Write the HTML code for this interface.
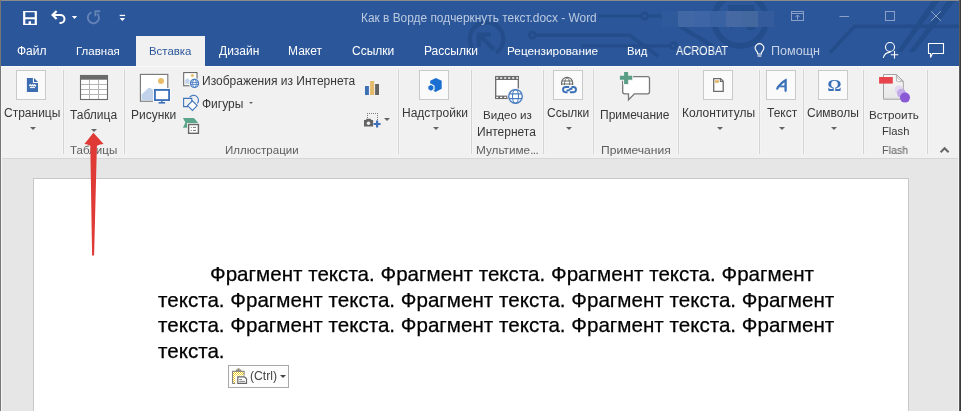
<!DOCTYPE html>
<html><head><meta charset="utf-8">
<style>
*{margin:0;padding:0;box-sizing:border-box}
html,body{width:961px;height:411px;overflow:hidden;background:#e6e6e6}
body{position:relative;font-family:"Liberation Sans",sans-serif}
.t,.a{will-change:transform}
.a{position:absolute}
.t{position:absolute;white-space:nowrap;font-size:12px;line-height:12px}
.tab{color:#fff}
.rl{color:#383838}
.gl{color:#5e5e5e}
.sep{position:absolute;width:1px;background:#d3d3d3;top:70px;height:84px;box-shadow:-1px 0 #f6f6f6,1px 0 #f5f5f5}
.box{position:absolute;width:30px;height:30px;top:70px;background:#fafafa;border:1px solid #c9c9c9}
.dd{position:absolute;width:0;height:0;border-left:3px solid transparent;border-right:3px solid transparent;border-top:3px solid #646464}
svg{position:absolute;overflow:visible}
</style></head><body>

<!-- title bar + tab row -->
<div class="a" style="left:0;top:0;width:961px;height:66px;background:#2b579a"></div>
<!-- circuit pattern -->
<svg style="left:0;top:0" width="961" height="66" viewBox="0 0 961 66">
 <g fill="none" stroke="#244d8b" stroke-width="3.2">
  <path d="M496.1 52.8 A16.8 16.8 0 1 0 476.9 52.8" stroke-width="4.4"/>
  <path d="M478.5 34.5 L494 49.5" stroke-width="4.4"/>
  <path d="M478.8 47 V34.6 H491" stroke-width="4.2"/>
  <path d="M536 35.2 H630 L658 56" stroke-width="3.6"/>
  <path d="M598 16 H661.5"/>
  <path d="M581 45.8 H669"/>
  <path d="M679 25.5 L713 46.5" stroke-width="4"/>
  <circle cx="740" cy="19.8" r="26" stroke-width="5.8"/>
  <path d="M830 52.5 L854.5 26.4 H961" stroke-width="3.6"/>
 </g>
 <path d="M896.8 52 H902 L940 0 H932.6 Z M908.5 52 H914.3 L956 0 H948 Z" fill="#244d8b"/>
 <path d="M728 5 H754.5 V30 H747 V12 H735 L731 31.5 Z" fill="#244d8b"/>
 <g fill="#2b579a" stroke="#244d8b" stroke-width="3">
  <circle cx="532.4" cy="35.1" r="3.1"/>
  <circle cx="644.6" cy="16" r="3"/>
  <circle cx="673.5" cy="45.8" r="3"/>
 </g>
</svg>
<!-- blurred name -->
<div class="a" style="left:662px;top:11px;width:16px;height:16px;background:#2e5a9c"></div>
<div class="a" style="left:678px;top:11px;width:16px;height:16px;background:#4168a5"></div>
<div class="a" style="left:694px;top:11px;width:16px;height:16px;background:#3e66a6"></div>
<div class="a" style="left:710px;top:11px;width:16px;height:16px;background:#3862a2"></div>
<div class="a" style="left:726px;top:11px;width:16px;height:16px;background:#4669a3"></div>
<div class="a" style="left:742px;top:11px;width:16px;height:16px;background:#43679f"></div>
<div class="a" style="left:758px;top:11px;width:16px;height:16px;background:#345c9c"></div>

<div class="t" style="left:361px;top:11.5px;color:#bccae0;font-size:11.9px">Как в Ворде подчеркнуть текст.docx - Word</div>

<!-- QAT icons -->
<svg style="left:0;top:0" width="140" height="30">
 <path d="M23.1 11.1 H36.9 V24.9 H23.1 Z M25.3 12.3 H34.7 V17.3 H25.3 Z M25.3 19.3 H34.7 V23.7 H31 V21.3 H28.6 V23.7 H25.3 Z" fill="#fff" fill-rule="evenodd"/>
 <path d="M53 15 H60.5 A4 4 0 0 1 60.5 23 H59.5" fill="none" stroke="#fff" stroke-width="2"/>
 <path d="M56.6 10.9 L52.6 15 L56.6 19" fill="none" stroke="#fff" stroke-width="2.2" stroke-linejoin="miter"/>
 <path d="M71.9 15.9 H77.2 L74.55 19 Z" fill="#fff"/>
 <path d="M91.6 12.3 A5.6 5.6 0 1 0 97.4 13.7" fill="none" stroke="#6483b7" stroke-width="1.9"/>
 <path d="M95.4 16.3 V11.3 H100.2" fill="none" stroke="#6483b7" stroke-width="1.9"/>
 <rect x="119.7" y="14.8" width="5.4" height="1.3" fill="#fff"/>
 <path d="M119.6 18 H125.2 L122.4 21 Z" fill="#fff"/>
</svg>

<!-- window controls -->
<svg style="left:0;top:0" width="961" height="30">
 <g fill="none" stroke="#8aa0c6" stroke-width="1">
  <rect x="791.5" y="11.5" width="12" height="9"/>
  <path d="M791.5 13.5 H803.5"/>
  <path d="M797.5 19.5 V15 M795.5 17 L797.5 15 L799.5 17"/>
  <path d="M839.5 16.5 H849"/>
  <rect x="885.5" y="11.5" width="9" height="9"/>
  <path d="M931 11 L941 21 M941 11 L931 21"/>
 </g>
</svg>

<!-- tabs -->
<div class="a" style="left:136px;top:36px;width:69px;height:30px;background:#f1f1f1"></div>
<div class="t tab" style="left:17px;top:45px">Файл</div>
<div class="t tab" style="left:76px;top:45px;font-size:11.5px">Главная</div>
<div class="t" style="left:148.5px;top:45px;color:#2b579a;font-size:11.4px">Вставка</div>
<div class="t tab" style="left:219px;top:45px">Дизайн</div>
<div class="t tab" style="left:288px;top:45px">Макет</div>
<div class="t tab" style="left:352px;top:45px">Ссылки</div>
<div class="t tab" style="left:424px;top:45px">Рассылки</div>
<div class="t tab" style="left:506.5px;top:45px;font-size:11.8px">Рецензирование</div>
<div class="t tab" style="left:626.5px;top:45px;font-size:11.3px">Вид</div>
<div class="t tab" style="left:675.5px;top:45px;font-size:12px;transform:scaleX(0.912);transform-origin:0 0">ACROBAT</div>
<div class="t" style="left:771px;top:45px;color:#c5d1e5;font-size:12.6px;top:44.5px">Помощн</div>
<svg style="left:0;top:0" width="961" height="66">
 <g fill="none" stroke="#fff" stroke-width="1.1">
  <path d="M757.6 54 V52.6 L756.2 50.6 A4.2 4.2 0 1 1 762.8 50.6 L761.4 52.6 V54 Z"/>
  <path d="M757.6 56 h3.8"/>
  <circle cx="890" cy="47" r="4.5"/>
  <path d="M883.3 57.8 Q884.6 52.4 890.5 52.1"/>
  <path d="M894.5 51 V58.5 M890.75 54.75 H898.25"/>
  <path d="M928.5 43.5 H943.5 V53.5 H932.5 L930.5 57.5 V53.5 H928.5 Z"/>
 </g>
</svg>

<!-- ribbon -->
<div class="a" style="left:0;top:66px;width:961px;height:92px;background:#f1f1f1"></div>
<div class="a" style="left:0;top:158px;width:961px;height:1px;background:#d6d6d6"></div>
<div class="a" style="left:0;top:66px;width:961px;height:1px;background:#f9f9f7"></div>

<div class="sep" style="left:63px"></div>
<div class="sep" style="left:124px"></div>
<div class="sep" style="left:398px"></div>
<div class="sep" style="left:471px"></div>
<div class="sep" style="left:543px"></div>
<div class="sep" style="left:593px"></div>
<div class="sep" style="left:678px"></div>
<div class="sep" style="left:759px"></div>
<div class="sep" style="left:803px"></div>
<div class="sep" style="left:863px"></div>
<div class="sep" style="left:927px"></div>

<!-- Pages -->
<div class="box" style="left:16px"></div>
<svg style="left:0;top:0" width="60" height="140">
 <path d="M26.9 78 H32.9 V83 H38 V91.9 H26.9 Z" fill="#3d6db1"/>
 <path d="M34 78 V81.9 H38 Z" fill="#3d6db1"/>
 <path d="M29.2 86 L30.2 84.6 L31.2 86 L32.2 84.6 L33.2 86 L34.2 84.6 L35.2 86 L36 84.8" stroke="#fff" stroke-width="1.1" fill="none"/>
 <rect x="29.9" y="87.1" width="5.1" height="1" fill="#fff"/>
</svg>
<div class="t rl" style="left:4px;top:107px">Страницы</div>
<div class="dd" style="left:30px;top:127px"></div>

<!-- Table -->
<svg style="left:0;top:0" width="120" height="140">
 <rect x="80.5" y="79.5" width="27" height="20" fill="#fff"/>
 <path d="M80.5 84.5 H107.5 M80.5 89.5 H107.5 M80.5 94.5 H107.5 M89.5 79.5 V99.5 M98.5 79.5 V99.5" stroke="#b3b3b3" stroke-width="1" fill="none"/>
 <rect x="80.5" y="75.5" width="27" height="24" fill="none" stroke="#6a6a6a" stroke-width="1.1"/>
 <rect x="80" y="75" width="28" height="4.7" fill="#6a6a6a"/>
</svg>
<div class="t rl" style="left:70px;top:109px">Таблица</div>
<div class="dd" style="left:91px;top:129px"></div>
<div class="t gl" style="transform:scaleX(1.052);left:70.0px;top:143.9px;font-size:11px;transform-origin:0 0">Таблицы</div>

<!-- Pictures -->
<svg style="left:0;top:0" width="400" height="140">
 <rect x="140.4" y="74.4" width="27.4" height="26.8" fill="#fff" stroke="#747474" stroke-width="1.1"/>
 <circle cx="161" cy="80.9" r="3" fill="#e8bc6a"/>
 <path d="M141.5 100.6 V94.6 L148.4 88 H150.6 L154 90.5 V100.6 Z" fill="#c0d3ea"/>
 <rect x="153" y="88" width="18" height="14" fill="#fff"/>
 <rect x="154.9" y="89.9" width="14.2" height="10.2" fill="#fff" stroke="#3c71b9" stroke-width="1.9"/>
 <path d="M158.6 102.8 H165.1" stroke="#3c71b9" stroke-width="1.6"/>
 <path d="M161.8 101 V102.5" stroke="#3c71b9" stroke-width="1.4"/>
 <!-- online pictures -->
 <rect x="183.7" y="72.6" width="13.3" height="13.2" fill="#fff" stroke="#5c5c5c" stroke-width="1"/>
 <circle cx="192.4" cy="75.4" r="1.5" fill="#e8bc6a"/>
 <path d="M185.2 83.7 V80.2 L187.4 78 L189.7 80.2 V83.7 Z" fill="#c0d3ea"/>
 <circle cx="194.5" cy="83.4" r="5.6" fill="#f1f1f1"/>
 <circle cx="194.5" cy="83.4" r="4" fill="#fff" stroke="#4a7ec2" stroke-width="1.3"/>
 <ellipse cx="194.5" cy="83.4" rx="1.9" ry="4" fill="none" stroke="#4a7ec2" stroke-width="0.9"/>
 <path d="M190.8 82.4 H198.2 M190.8 84.4 H198.2" stroke="#4a7ec2" stroke-width="0.9"/>
 <!-- shapes -->
 <path d="M191.8 101 V98.4 H183.6 V106.6 H188" fill="none" stroke="#3f74bb" stroke-width="1.1"/>
 <path d="M189.6 97.2 A4.5 4.5 0 1 1 197.4 103.4" fill="none" stroke="#3f74bb" stroke-width="1.1"/>
 <path d="M192.4 100.8 L197.2 105.6 L192.4 110.4 L187.6 105.6 Z" fill="#fff" stroke="#3f74bb" stroke-width="1.1"/>
 <!-- smartart -->
 <path d="M182.9 118 H193.9 L197.9 122.6 L193.9 127.7 H182.9 L185.4 122.6 Z" fill="#5ba68a"/>
 <rect x="187" y="123" width="13" height="12" fill="#f1f1f1"/>
 <rect x="188.6" y="124.5" width="9.8" height="8.8" fill="#fff" stroke="#666" stroke-width="1.4"/>
 <path d="M190.8 127.4 H191.8 M193 127.4 H196 M190.8 130.4 H191.8 M193 130.4 H196" stroke="#777" stroke-width="1"/>
 <!-- chart -->
 <rect x="365" y="86" width="3.9" height="9" fill="#3d70b4"/>
 <rect x="370.1" y="81" width="4.1" height="14" fill="#e3b96c"/>
 <rect x="375.1" y="84" width="3.9" height="11" fill="#636363"/>
 <!-- screenshot -->
 <path d="M367 113h1v1h-1z M369 113h1v1h-1z M371 113h1v1h-1z M373 113h1v1h-1z M375 113h1v1h-1z M377 113h1v1h-1z M377 115h1v1h-1z M377 117h1v1h-1z M377 119h1v1h-1z M377 121h1v1h-1z M367 115h1v1h-1z M367 117h1v1h-1z" fill="#7a7a7a"/>
 <path d="M364 120 H365.8 L366.6 118.7 H370.6 L371.4 120 H373.1 V126.6 H364 Z" fill="#636363"/>
 <circle cx="368.5" cy="123.2" r="1.7" fill="#f1f1f1"/>
 <path d="M377.1 120.5 V127.5 M373.6 124 H380.6" stroke="#3c71b9" stroke-width="2.2"/>
</svg>
<div class="t rl" style="left:131px;top:109px">Рисунки</div>
<div class="t rl" style="left:202px;top:75.4px">Изображения из Интернета</div>
<div class="t rl" style="left:202px;top:97.7px">Фигуры</div>
<div class="dd" style="left:248.9px;top:102.2px;border-left-width:2.3px;border-right-width:2.3px;border-top-width:2.6px"></div>
<div class="dd" style="left:384px;top:118px"></div>
<div class="t gl" style="transform:scaleX(1.046);left:224.70000000000002px;top:143.9px;font-size:11px;transform-origin:0 0">Иллюстрации</div>

<!-- Add-ins -->
<div class="box" style="left:419px"></div>
<svg style="left:0;top:0" width="460" height="140">
 <path d="M430.2 80.7 L435.9 78 L441.7 80.7 V88.7 L435.5 91.9 L430.2 88.5 Z" fill="#1b6fd1"/>
 <path d="M430.9 84.3 L434 86 V89.6 L430.9 91.4 L427.8 89.6 V86 Z" fill="#1b6fd1" stroke="#fafafa" stroke-width="1.2"/>
</svg>
<div class="t rl" style="left:402px;top:107px">Надстройки</div>
<div class="dd" style="left:433px;top:127px"></div>

<!-- Online video -->
<svg style="left:0;top:0" width="540" height="140">
 <rect x="495.7" y="76.6" width="22.6" height="21.8" fill="#fff" stroke="#6b6b6b" stroke-width="1.3"/>
 <rect x="495.1" y="76" width="23.9" height="4" fill="#6b6b6b"/>
 <rect x="495.1" y="95.6" width="23.9" height="3.3" fill="#6b6b6b"/>
 <path d="M496.2 78 H518" stroke="#fff" stroke-width="1.3" stroke-dasharray="2 2"/>
 <path d="M496.2 97.3 H518" stroke="#fff" stroke-width="1.3" stroke-dasharray="2 2"/>
 <circle cx="515.5" cy="96.4" r="8.3" fill="#f1f1f1"/>
 <circle cx="515.5" cy="96.4" r="6.8" fill="#fff" stroke="#4a7ec2" stroke-width="1.4"/>
 <ellipse cx="515.5" cy="96.4" rx="3" ry="6.8" fill="none" stroke="#4a7ec2" stroke-width="1.1"/>
 <path d="M509 93.9 H522 M509 98.6 H522" stroke="#4a7ec2" stroke-width="1.1"/>
</svg>
<div class="t rl" style="left:483px;top:109px;font-size:11.6px">Видео из</div>
<div class="t rl" style="left:477px;top:125.5px">Интернета</div>
<div class="t gl" style="transform:scaleX(1.068);left:475.59999999999997px;top:143.9px;font-size:11px;transform-origin:0 0">Мультиме<span style="letter-spacing:-0.6px">...</span></div>

<!-- Links -->
<div class="box" style="left:553px"></div>
<svg style="left:0;top:0" width="600" height="140">
 <path d="M561.6 85.5 V82.8 A5.5 5.5 0 0 1 572.6 82.8 V85.5" fill="#fff" stroke="#6a6a6a" stroke-width="1.2"/>
 <path d="M564.6 85 V82.5 Q565 79 567.1 77.6 Q569.2 79 569.6 82.5 V85 M561.8 81 H572.4 M561.8 84 H572.4" fill="none" stroke="#6a6a6a" stroke-width="1"/>
 <rect x="561" y="85" width="17" height="9" fill="#fafafa"/>
 <path d="M569.2 87 H565.6 A2.6 2.6 0 0 0 565.6 92.2 H567.6" fill="none" stroke="#3a70b8" stroke-width="1.9"/>
 <path d="M569.8 92.2 H573.4 A2.6 2.6 0 0 0 573.4 87 H571.4" fill="none" stroke="#3a70b8" stroke-width="1.9"/>
 <path d="M566.5 90.4 L568.6 90.4 L570.6 88.8 H572.5" fill="none" stroke="#3a70b8" stroke-width="1.9"/>
</svg>
<div class="t rl" style="left:547px;top:107px">Ссылки</div>
<div class="dd" style="left:566px;top:127px"></div>

<!-- Comment -->
<svg style="left:0;top:0" width="680" height="140">
 <path d="M624.7 76.7 H647.5 A2 2 0 0 1 649.5 78.7 V91.8 A2 2 0 0 1 647.5 93.8 H634.4 L628.5 99.8 V93.8 H624.7 A2 2 0 0 1 622.7 91.8 V78.7 A2 2 0 0 1 624.7 76.7 Z" fill="#fff" stroke="#777" stroke-width="1.3"/>
 <path d="M626.1 70.9 V84.9 M618.9 77.8 H633.2" stroke="#f1f1f1" stroke-width="6"/>
 <path d="M626.1 71.9 V83.9 M619.9 77.8 H632.2" stroke="#5a9e85" stroke-width="4"/>
</svg>
<div class="t rl" style="left:600px;top:109px">Примечание</div>
<div class="t gl" style="transform:scaleX(1.098);left:600.6999999999999px;top:143.9px;font-size:11px;transform-origin:0 0">Примечания</div>

<!-- Header footer -->
<div class="box" style="left:703px"></div>
<svg style="left:0;top:0" width="760" height="140">
 <path d="M713.7 78.6 H720.6 L723.2 81.3 V91.3 H713.7 Z" fill="#fff" stroke="#6b6b6b" stroke-width="1.3"/>
 <rect x="715" y="80.2" width="4" height="2.6" fill="#e3b96c"/>
 <path d="M720.4 78.8 V81.5 H723" fill="none" stroke="#6b6b6b" stroke-width="1.1"/>
</svg>
<div class="t rl" style="left:682px;top:107px">Колонтитулы</div>
<div class="dd" style="left:717px;top:127px"></div>

<!-- Text -->
<div class="box" style="left:766px"></div>
<svg style="left:0;top:0" width="800" height="100">
 <path d="M777.3 88.6 Q778.2 86.2 781 83.8 Q783.5 81.2 785.6 80.2 L785.6 90.8" fill="none" stroke="#3a70b8" stroke-width="2.3" stroke-linecap="round"/>
 <path d="M779.6 86.4 H785.4" stroke="#3a70b8" stroke-width="1.8"/>
</svg>
<div class="t rl" style="left:767px;top:107px">Текст</div>
<div class="dd" style="left:779px;top:127px"></div>

<!-- Symbols -->
<div class="box" style="left:818px"></div>
<div class="a" style="left:825.5px;top:76.6px;width:17px;font-family:'Liberation Serif';font-weight:bold;font-size:17.4px;line-height:17px;color:#3a70b8;text-align:center">Ω</div>
<div class="t rl" style="left:807px;top:107px">Символы</div>
<div class="dd" style="left:831px;top:127px"></div>

<!-- Flash -->
<svg style="left:0;top:0" width="961" height="140">
 <defs><linearGradient id="fg" x1="0" y1="0" x2="0" y2="1"><stop offset="0" stop-color="#f7f7f7"/><stop offset="1" stop-color="#e6e6e6"/></linearGradient></defs>
 <path d="M883.5 74.5 H896.3 L903.3 81.2 V99.2 H883.5 Z" fill="url(#fg)" stroke="#a3a3a3" stroke-width="1"/>
 <path d="M896.3 74.5 Q897 80 903.3 81.2 Q898 82.5 896.5 81 Z" fill="#fdfdfd" stroke="#a8a8a8" stroke-width="0.8"/>
 <rect x="879.1" y="77" width="13.7" height="6.6" fill="#e6434b"/>
 <circle cx="898.8" cy="89.6" r="4" fill="#e2d8f2"/>
 <circle cx="901.5" cy="93.2" r="4.5" fill="#c3abea"/>
 <circle cx="905" cy="97.6" r="5" fill="#8a5ad6"/>
</svg>
<div class="t rl" style="left:869.3px;top:109px;font-size:11.7px">Встроить</div>
<div class="t rl" style="left:882px;top:125px;font-size:11.2px">Flash</div>
<div class="t gl" style="transform:scaleX(0.973);left:882.1999999999999px;top:143.9px;font-size:11px;transform-origin:0 0">Flash</div>
<svg style="left:0;top:0" width="961" height="160">
 <path d="M940.6 152.2 L944.6 148.2 L948.6 152.2" fill="none" stroke="#666" stroke-width="2"/>
</svg>

<!-- document page -->
<div class="a" style="left:33px;top:178px;width:876px;height:240px;background:#fff;border:1px solid #c8c8c8"></div>
<div class="a" style="left:158px;top:260.5px;width:720px;font-size:20.6px;line-height:25.6px;color:#000;white-space:nowrap;-webkit-text-stroke:0.25px #000">
<div style="padding-left:52px">Фрагмент текста. Фрагмент текста. Фрагмент текста. Фрагмент</div>
<div>текста. Фрагмент текста. Фрагмент текста. Фрагмент текста. Фрагмент</div>
<div>текста. Фрагмент текста. Фрагмент текста. Фрагмент текста. Фрагмент</div>
<div>текста.</div>
</div>

<!-- paste options -->
<div class="a" style="left:228px;top:365px;width:61px;height:23px;background:#fdfdfd;border:1px solid #a9a9a9"></div>
<svg style="left:0;top:0" width="300" height="400">
 <defs><pattern id="chk" x="0" y="0" width="2" height="2" patternUnits="userSpaceOnUse"><rect width="2" height="2" fill="#fff"/><rect width="1" height="1" fill="#f2cf1c"/><rect x="1" y="1" width="1" height="1" fill="#f2cf1c"/></pattern></defs>
 <rect x="232.6" y="371.3" width="11.5" height="12.1" fill="url(#chk)" stroke="#7a7a7a" stroke-width="1"/>
 <rect x="235.2" y="375.5" width="12.5" height="9" fill="#fdfdfd"/>
 <path d="M235.9 371.4 V369.6 H237.6 V368.2 H239.5 V369.6 H241.2 V371.4 Z" fill="#8f8a80"/>
 <path d="M237.8 376.8 H244.5 L246.5 378.8 V383.3 H237.8 Z" fill="#fff" stroke="#666" stroke-width="1.2"/>
 <path d="M239.3 379.5 H242 M239.3 381.4 H245" stroke="#777" stroke-width="0.9"/>
</svg>
<div class="t" style="left:249.8px;top:370.3px;color:#444;font-size:12.2px">(Ctrl)</div>
<div class="dd" style="left:280px;top:375px;border-top-color:#444"></div>

<!-- red arrow -->
<svg style="left:0;top:0" width="961" height="411">
 <path d="M93.4 132.8 L103.6 143.9 Q100 144 96.9 145.8 L94.1 255.6 H92.1 L90.3 145.8 Q87.5 144 84.4 143.9 Z" fill="#e03a36"/>
</svg>

<!-- window border -->
<div class="a" style="left:0;top:0;width:961px;height:1px;background:#8c8c8c"></div>
<div class="a" style="left:0;top:0;width:1px;height:411px;background:#777"></div>
<div class="a" style="left:1px;top:66px;width:1px;height:345px;background:#f7f7f7"></div>
<div class="a" style="left:958px;top:66px;width:1px;height:345px;background:#f6f6f6"></div>
<div class="a" style="left:959px;top:0;width:1px;height:411px;background:#595959"></div>
<div class="a" style="left:960px;top:0;width:1px;height:411px;background:#3c3c3c"></div>

</body></html>
